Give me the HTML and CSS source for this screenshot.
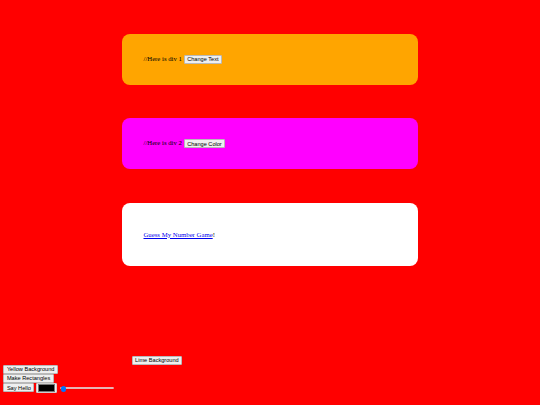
FILE: index.html
```html
<!DOCTYPE html>
<html>
<head>
  <title>DOM Playground</title>
  <link rel="stylesheet" href="styles.css">
</head>
<body>
  <div class="box box-orange" id="div1">
    <span id="text1">//Here is div 1</span>
    <button id="changeText">Change Text</button>
  </div>
  <div class="box box-pink" id="div2">
    <span>//Here is div 2</span>
    <button id="changeColor">Change Color</button>
  </div>
  <div class="box box-white" id="div3">
    <p><a href="#">Guess My Number Game</a>!</p>
  </div>
  <canvas id="canvas"></canvas>
  <button id="limeButton">Lime Background</button>
  <br>
  <button id="yellowButton">Yellow Background</button>
  <br>
  <button id="rectButton">Make Rectangles</button>
  <br>
  <button id="helloButton">Say Hello</button>
  <input type="color" id="colorPicker" value="#000000">
  <input type="range" id="slider" min="0" max="100" value="0">
</body>
</html>
```

FILE: styles.css
```css
:root {
  --page-red: #ff0000;
  --box-orange: #ffa500;
  --box-pink: #ff00ff;
  --box-white: #ffffff;
  --button-face: #efefef;
  --button-border: #b9b9b9;
  --link-color: #0000ee;
}

body {
  margin: 0 3.375px 3.375px;
  background-color: var(--page-red);
  font-family: "Liberation Serif", "Times New Roman", serif;
  font-size: 6.75px;
  color: #000;
}

.box {
  width: 253px;
  margin: 33.5px auto;
  padding: 21.1px;
  border-radius: 8px;
}

.box-orange {
  background-color: var(--box-orange);
}

.box-pink {
  background-color: var(--box-pink);
}

.box-white {
  background-color: var(--box-white);
}

.box p {
  margin: 6.75px 0;
}

.box a {
  color: var(--link-color);
}

canvas {
  width: 126.5px;
  height: 63.3px;
}

button {
  margin: 0;
  padding: 0.4px 2.5px;
  font-family: "Liberation Sans", Arial, sans-serif;
  font-size: 5.625px;
  line-height: 6.2px;
  color: #000;
  background-color: var(--button-face);
  border: 1px solid var(--button-border);
  border-radius: 1px;
}

input[type="color"] {
  width: 21px;
  height: 10.5px;
  margin: 0;
  padding: 0.5px 1px;
  border: 1px solid #cfcfcf;
  border-radius: 1px;
  background-color: var(--button-face);
  vertical-align: middle;
}

input[type="color"]::-webkit-color-swatch-wrapper {
  padding: 0;
}

input[type="color"]::-webkit-color-swatch {
  border: 1px solid #777;
  border-radius: 0;
}

input[type="range"] {
  -webkit-appearance: none;
  appearance: none;
  width: 54.5px;
  height: 6.75px;
  margin: 0 0.85px;
  background: transparent;
  vertical-align: middle;
}

input[type="range"]::-webkit-slider-runnable-track {
  height: 2.7px;
  background-color: #ffffff;
  border: 0.5px solid #e6b4b4;
  border-radius: 1.5px;
}

input[type="range"]::-webkit-slider-thumb {
  -webkit-appearance: none;
  width: 5.5px;
  height: 5.5px;
  margin-top: -1.7px;
  border-radius: 50%;
  background-color: #0075ff;
}
```
